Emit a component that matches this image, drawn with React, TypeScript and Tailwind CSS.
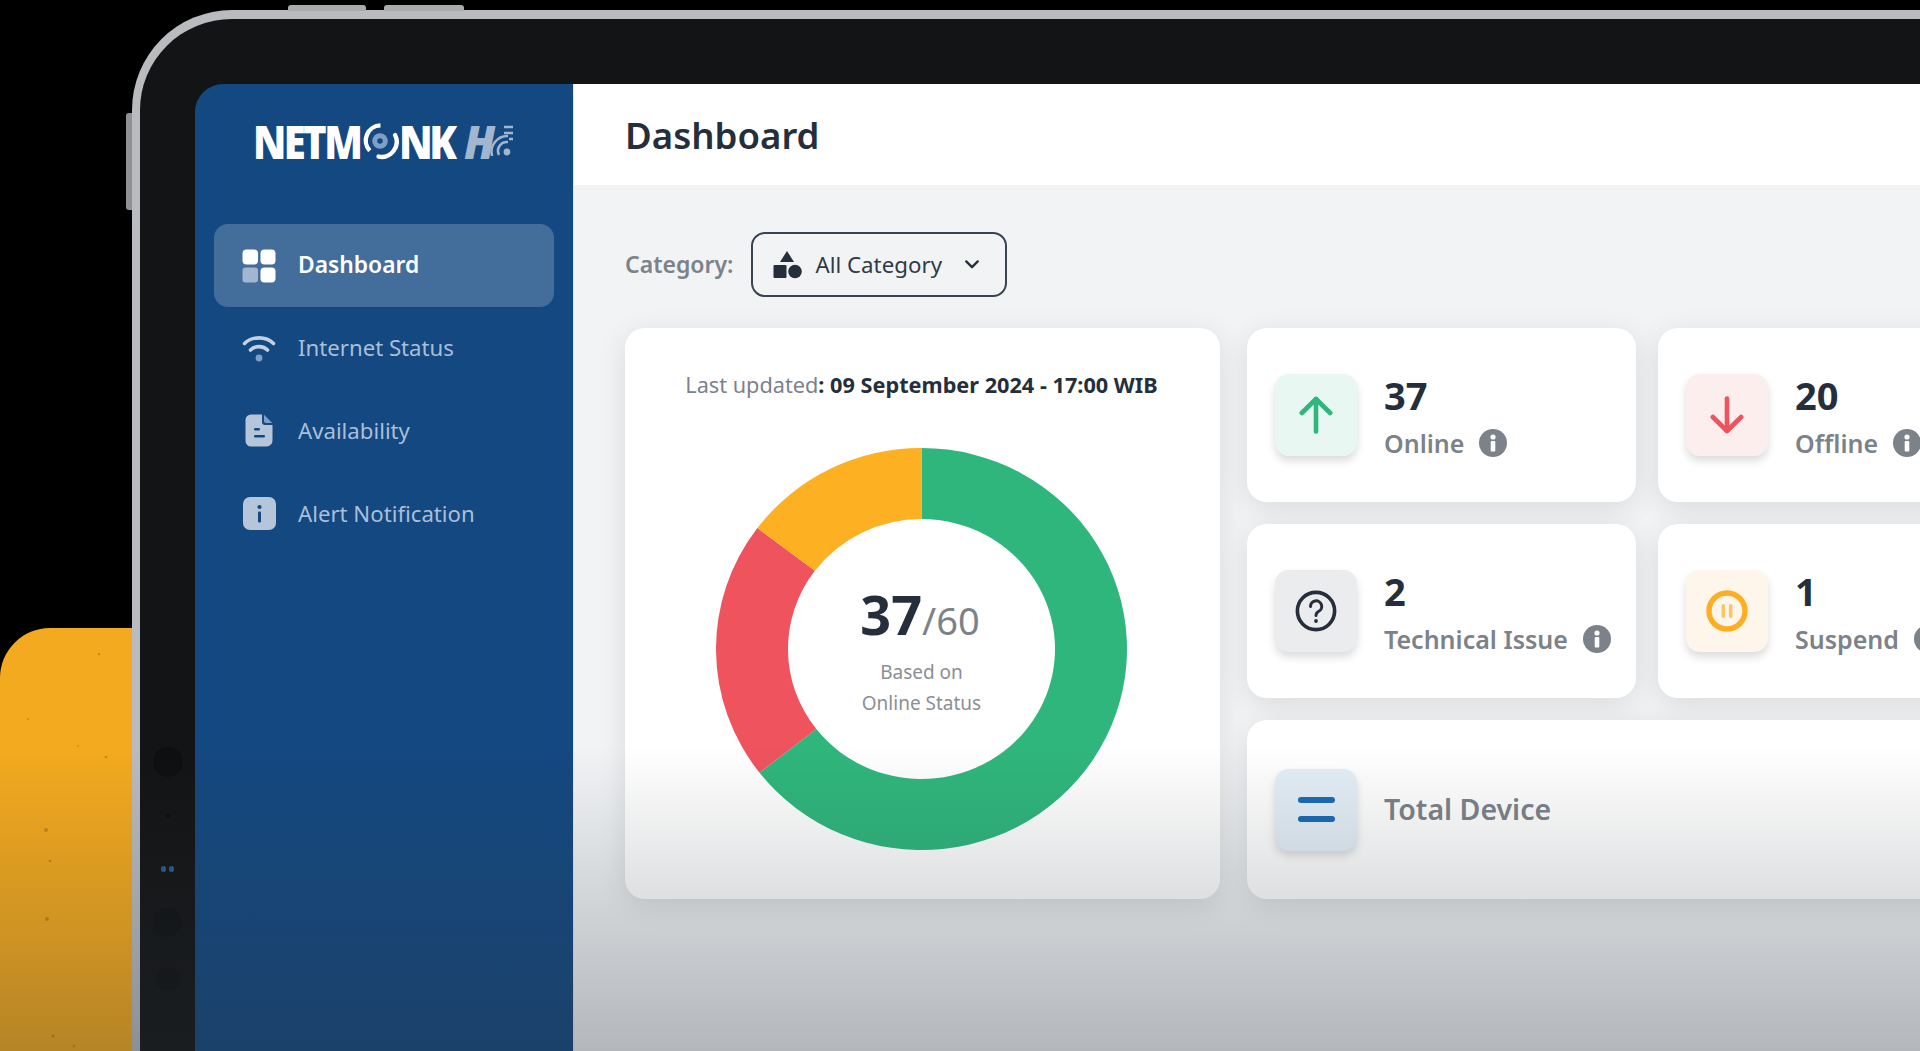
import type { ReactNode } from "react";

const ink = "#252f3b";

// donut is slightly squashed in the source, so radii differ per axis
const CX = 205.5;
const CY = 201;
const seg = (from: number, to: number) => {
  const pt = (rx: number, ry: number, deg: number) => {
    const a = (deg * Math.PI) / 180;
    return `${(CX + rx * Math.sin(a)).toFixed(2)} ${(CY - ry * Math.cos(a)).toFixed(2)}`;
  };
  const large = to - from > 180 ? 1 : 0;
  return `M${pt(205.5, 201, from)} A205.5 201 0 ${large} 1 ${pt(205.5, 201, to)} L${pt(133.5, 130, to)} A133.5 130 0 ${large} 0 ${pt(133.5, 130, from)} Z`;
};

const InfoDot = () => (
  <svg width="28" height="28" viewBox="0 0 28 28" className="shrink-0">
    <circle cx="14" cy="14" r="14" fill="#7c828a" />
    <circle cx="14" cy="8" r="2.6" fill="#fff" />
    <rect x="11.7" y="12" width="4.6" height="10.5" rx="1" fill="#fff" />
  </svg>
);

const StatCard = ({ value, label, tint, children }: { value: string; label: string; tint: string; children: ReactNode }) => (
  <div className="h-[174px] bg-white rounded-[20px] shadow-[0_6px_28px_rgba(0,0,0,0.1)] flex items-center pl-[28px]">
    <div className={`w-[82px] h-[82px] rounded-[14px] flex items-center justify-center shadow-[0_5px_9px_rgba(0,0,0,0.14)] ${tint}`}>
      {children}
    </div>
    <div className="ml-[27px] pt-[3px]">
      <div className="text-[38px] leading-[44px] font-bold text-[#252f3b]">{value}</div>
      <div className="mt-[8px] flex items-center gap-[15px] text-[25px] leading-[36px] font-semibold text-[#7c828a] whitespace-nowrap">
        {label}
        <InfoDot />
      </div>
    </div>
  </div>
);

const NavItem = ({ label, active, icon }: { label: string; active?: boolean; icon: ReactNode }) => (
  <div
    className={`h-[83px] rounded-[14px] pl-[28px] flex items-center gap-[22px] ${
      active ? "bg-[#436e9b] text-white font-semibold text-[22.8px]" : "pb-[2px] text-[#a9bfd9] text-[22.2px]"
    }`}
  >
    <div className="w-[34px] h-[34px] flex items-center justify-center shrink-0">{icon}</div>
    {label}
  </div>
);

const Logo = () => (
  <div className="flex items-center h-[36px] text-white font-black text-[46px] leading-none font-['Open_Sans','Noto_Sans',sans-serif]">
    <div className="w-[109px] shrink-0">
      <span className="inline-block tracking-[-3px] scale-x-[0.87] origin-left">NETM</span>
    </div>
    <svg width="37" height="38" viewBox="0 0 38 38" className="shrink-0">
      <path d="M8 29 A15.5 15.5 0 0 1 19 3" fill="none" stroke="#fff" strokeWidth="4.5" />
      <path d="M34 13 A15.5 15.5 0 0 1 17 35" fill="none" stroke="#fff" strokeWidth="4.5" strokeLinecap="round" />
      <circle cx="18.5" cy="19" r="8" fill="#7f9fc4" />
      <circle cx="18.5" cy="19" r="2.8" fill="#144880" />
    </svg>
    <div className="w-[54px] shrink-0">
      <span className="inline-block tracking-[-4px] scale-x-[0.88] origin-left">NK</span>
    </div>
    <span className="ml-[11px] italic text-[#a3b6cf] inline-block scale-x-[0.95] origin-left">H</span>
    <svg width="30" height="34" viewBox="0 0 30 34" className="ml-[-13px] shrink-0">
      <circle cx="23" cy="28" r="3.4" fill="#a3b6cf" />
      <g fill="none" stroke="#a3b6cf" strokeWidth="2.6">
        <path d="M15 31 A9 9 0 0 1 24 18" />
        <path d="M8 32 A16 16 0 0 1 24 12" />
        <path d="M20 3 H29" />
        <path d="M20 9 H29" />
        <path d="M25 15 H29" />
      </g>
    </svg>
  </div>
);

export default function App() {
  return (
    <div className="relative w-[1920px] h-[1051px] overflow-hidden bg-black flex font-['Noto_Sans','Open_Sans',sans-serif]">
      {/* yellow backdrop */}
      <div className="w-[132px] shrink-0 flex flex-col justify-end">
        <div className="h-[423px] bg-[#f4aa1e] rounded-tl-[50px] overflow-hidden">
          <svg width="131" height="423" viewBox="0 0 131 423" fill="#8a5a10" opacity="0.4">
            <circle cx="46" cy="202" r="2" />
            <circle cx="106" cy="129" r="1.3" />
            <circle cx="50" cy="233" r="1.3" />
            <circle cx="47" cy="291" r="2" />
            <circle cx="99" cy="26" r="1.2" />
            <circle cx="28" cy="91" r="1" />
            <circle cx="53" cy="408" r="1.6" />
            <circle cx="74" cy="418" r="1.2" />
            <circle cx="78" cy="118" r="1" />
          </svg>
        </div>
      </div>

      {/* tablet body */}
      <div className="relative flex-1 min-w-0 mt-[10px] pt-[65px] border-l-[8px] border-t-[9px] border-[#b9bbbe] rounded-tl-[100px] bg-[#131415] flex">
        <div className="absolute top-[-14px] left-[148px] w-[78px] h-[6px] bg-[#a9abae] rounded-t-[3px]" />
        <div className="absolute top-[-14px] left-[244px] w-[80px] h-[6px] bg-[#a9abae] rounded-t-[3px]" />
        <div className="absolute top-[94px] left-[-14px] w-[6px] h-[97px] bg-[#8f9194] rounded-l-[3px]" />

        {/* bezel with camera and sensors */}
        <div className="w-[55px] shrink-0 flex flex-col items-center pt-[663px]">
          <div className="w-[30px] h-[30px] rounded-full bg-[#0e0f10]" />
          <div className="mt-[37px] w-[4px] h-[4px] rounded-full bg-[#0c0d0e]" />
          <div className="mt-[48px] flex gap-[3px]">
            <div className="w-[5px] h-[6px] rounded-full bg-[#2c5a92]" />
            <div className="w-[5px] h-[6px] rounded-full bg-[#2c5a92]" />
          </div>
          <div className="mt-[36px] w-[29px] h-[29px] rounded-full bg-[#101112]" />
          <div className="mt-[30px] w-[24px] h-[24px] rounded-full bg-[#101112]" />
        </div>

        {/* screen */}
        <div className="flex-1 min-w-0 flex rounded-tl-[28px] overflow-hidden">
          <aside className="w-[378px] shrink-0 bg-[#144880] px-[19px]">
            <div className="h-[114px] pl-[39px] flex items-center mb-[26px]">
              <Logo />
            </div>
            <NavItem
              active
              label="Dashboard"
              icon={
                <svg width="34" height="34" viewBox="0 0 34 34">
                  <rect x="0.5" y="0.5" width="15.5" height="15" rx="4" fill="#fff" />
                  <rect x="18.5" y="0.5" width="15" height="15" rx="4" fill="#fff" />
                  <rect x="0.5" y="18.5" width="15.5" height="15" rx="3" fill="#a1b6d0" />
                  <rect x="18.5" y="18.5" width="15" height="15" rx="4" fill="#fff" />
                </svg>
              }
            />
            <NavItem
              label="Internet Status"
              icon={
                <svg width="34" height="28" viewBox="0 0 34 28" fill="none">
                  <path d="M2.5 9.5 C10 2 24 2 31.5 9.5" stroke="#c3d0e1" strokeWidth="3.6" strokeLinecap="round" />
                  <path d="M8.5 16 C13 11.5 21 11.5 25.5 16" stroke="#c3d0e1" strokeWidth="3.6" strokeLinecap="round" />
                  <circle cx="17" cy="24" r="3.4" fill="#7f9fc4" />
                </svg>
              }
            />
            <NavItem
              label="Availability"
              icon={
                <svg width="28" height="33" viewBox="0 0 28 33">
                  <path d="M6 0.5 H17 V8 A3 3 0 0 0 20 11 H27.5 V26 A6 6 0 0 1 21.5 32.5 H6 A5.5 5.5 0 0 1 0.5 27 V6 A5.5 5.5 0 0 1 6 0.5 Z" fill="#b5c5da" />
                  <path d="M19 0.8 L27.3 9 H21 A2 2 0 0 1 19 7 Z" fill="#7f9fc4" />
                  <rect x="9" y="14" width="6" height="2.6" rx="1.3" fill="#144880" />
                  <rect x="9" y="21" width="11" height="2.6" rx="1.3" fill="#144880" />
                </svg>
              }
            />
            <NavItem
              label="Alert Notification"
              icon={
                <svg width="33" height="33" viewBox="0 0 33 33">
                  <rect width="33" height="33" rx="7" fill="#b5c5da" />
                  <circle cx="16.5" cy="10" r="2.1" fill="#144880" />
                  <rect x="15" y="14.5" width="3" height="11" rx="1.2" fill="#144880" />
                </svg>
              }
            />
          </aside>

          <main className="flex-1 min-w-0 border-l border-[#dfe6ee] bg-[#f1f3f5] overflow-hidden">
            <header className="h-[101px] bg-white pl-[51px] pt-[2px] flex items-center text-[36.6px] font-semibold text-[#252f3b]">
              Dashboard
            </header>

            <div className="pl-[51px] pt-[47px]">
              <div className="flex items-center gap-[18px]">
                <span className="text-[23px] font-semibold text-[#7c828a]">Category:</span>
                <div className="w-[256px] h-[65px] border-2 border-[#3a4450] rounded-[14px] flex items-center pl-[20px] text-[22.3px] text-[#2f3a46]">
                  <svg width="29" height="28" viewBox="0 0 29 28" fill={ink}>
                    <path d="M14 0 L21 11 H7 Z" />
                    <rect x="0.5" y="14" width="13" height="13" rx="1" />
                    <circle cx="22" cy="20.5" r="6.8" />
                  </svg>
                  <span className="ml-[13px]">All Category</span>
                  <svg width="16" height="11" viewBox="0 0 18 12" fill="none" className="ml-[22px]">
                    <path d="M2.5 2.5 L9 9 L15.5 2.5" stroke={ink} strokeWidth="2.6" strokeLinecap="round" strokeLinejoin="round" />
                  </svg>
                </div>
              </div>

              <div className="mt-[31px] flex gap-[27px] w-[1500px]">
                {/* donut card */}
                <div className="w-[595px] h-[571px] shrink-0 bg-white rounded-[20px] shadow-[0_6px_28px_rgba(0,0,0,0.1)] pt-[40px] pr-[2px] flex flex-col items-center">
                  <p className="text-[21.7px] leading-[34px] text-[#7c828a]">
                    Last updated<span className="font-bold text-[#252f3b]">: 09 September 2024 - 17:00 WIB</span>
                  </p>
                  <div className="mt-[46px] w-[411px] h-[402px] grid place-items-center">
                    <svg width="411" height="402" viewBox="0 0 411 402" className="col-start-1 row-start-1">
                      <path d={seg(0, 232)} fill="#2fb67c" />
                      <path d={seg(232, 307)} fill="#ee535e" />
                      <path d={seg(307, 360)} fill="#fdb022" />
                    </svg>
                    <div className="col-start-1 row-start-1 text-center mt-[2px]">
                      <div className="flex items-baseline justify-center text-[#7c828a] text-[38px] leading-[64px] pr-[3px]">
                        <span className="text-[54px] font-bold text-[#252f3b]">37</span>
                        /60
                      </div>
                      <div className="mt-[5px] text-[19px] leading-[30.5px] text-[#8a8f94]">
                        Based on
                        <br />
                        Online Status
                      </div>
                    </div>
                  </div>
                </div>

                {/* status cards */}
                <div className="grid grid-cols-[389px_390px] gap-[22px] content-start">
                  <StatCard value="37" label="Online" tint="bg-[#e8f7f1]">
                    <svg width="34" height="38" viewBox="0 0 34 38" fill="none" stroke="#2fb67c" strokeWidth="4.6" strokeLinecap="round" strokeLinejoin="round">
                      <path d="M17 35.5 V3" />
                      <path d="M2.8 17 L17 3 L31.2 17" />
                    </svg>
                  </StatCard>
                  <StatCard value="20" label="Offline" tint="bg-[#fdeeee]">
                    <svg width="34" height="38" viewBox="0 0 34 38" fill="none" stroke="#ee535e" strokeWidth="4.6" strokeLinecap="round" strokeLinejoin="round">
                      <path d="M17 2.5 V35" />
                      <path d="M2.8 21 L17 35 L31.2 21" />
                    </svg>
                  </StatCard>
                  <StatCard value="2" label="Technical Issue" tint="bg-[#ebecee]">
                    <svg width="42" height="42" viewBox="0 0 42 42" fill="none" stroke="#252f3b">
                      <circle cx="21" cy="21" r="18.6" strokeWidth="3.6" />
                      <path d="M15.5 16.5 A5.6 5.6 0 1 1 23.5 21.5 C21.5 22.6 21 23.5 21 25.5" strokeWidth="3" strokeLinecap="round" />
                      <circle cx="21" cy="31" r="1.9" fill="#252f3b" stroke="none" />
                    </svg>
                  </StatCard>
                  <StatCard value="1" label="Suspend" tint="bg-[#fef6ea]">
                    <svg width="42" height="42" viewBox="0 0 42 42" fill="none">
                      <circle cx="21" cy="21" r="18" stroke="#fdae22" strokeWidth="5.4" />
                      <rect x="15.5" y="14" width="3.6" height="14" rx="1.8" fill="#fbc56a" />
                      <rect x="22.9" y="14" width="3.6" height="14" rx="1.8" fill="#fbc56a" />
                    </svg>
                  </StatCard>
                  <div className="col-span-2 h-[179px] bg-white rounded-[20px] shadow-[0_6px_28px_rgba(0,0,0,0.1)] flex items-center pl-[28px]">
                    <div className="w-[82px] h-[82px] rounded-[14px] bg-[#e3eef6] shadow-[0_5px_9px_rgba(0,0,0,0.14)] flex flex-col items-center justify-center gap-[13px]">
                      <div className="w-[37px] h-[6px] rounded-full bg-[#1a6bb5]" />
                      <div className="w-[37px] h-[6px] rounded-full bg-[#1a6bb5]" />
                    </div>
                    <span className="ml-[27px] text-[28.5px] font-semibold text-[#7c828a]">Total Device</span>
                  </div>
                </div>
              </div>
            </div>
          </main>
        </div>
      </div>

      {/* video fade towards the bottom */}
      <div className="absolute inset-0 pointer-events-none bg-[linear-gradient(to_bottom,transparent_71%,rgba(42,50,58,0.31)_100%)]" />
    </div>
  );
}
